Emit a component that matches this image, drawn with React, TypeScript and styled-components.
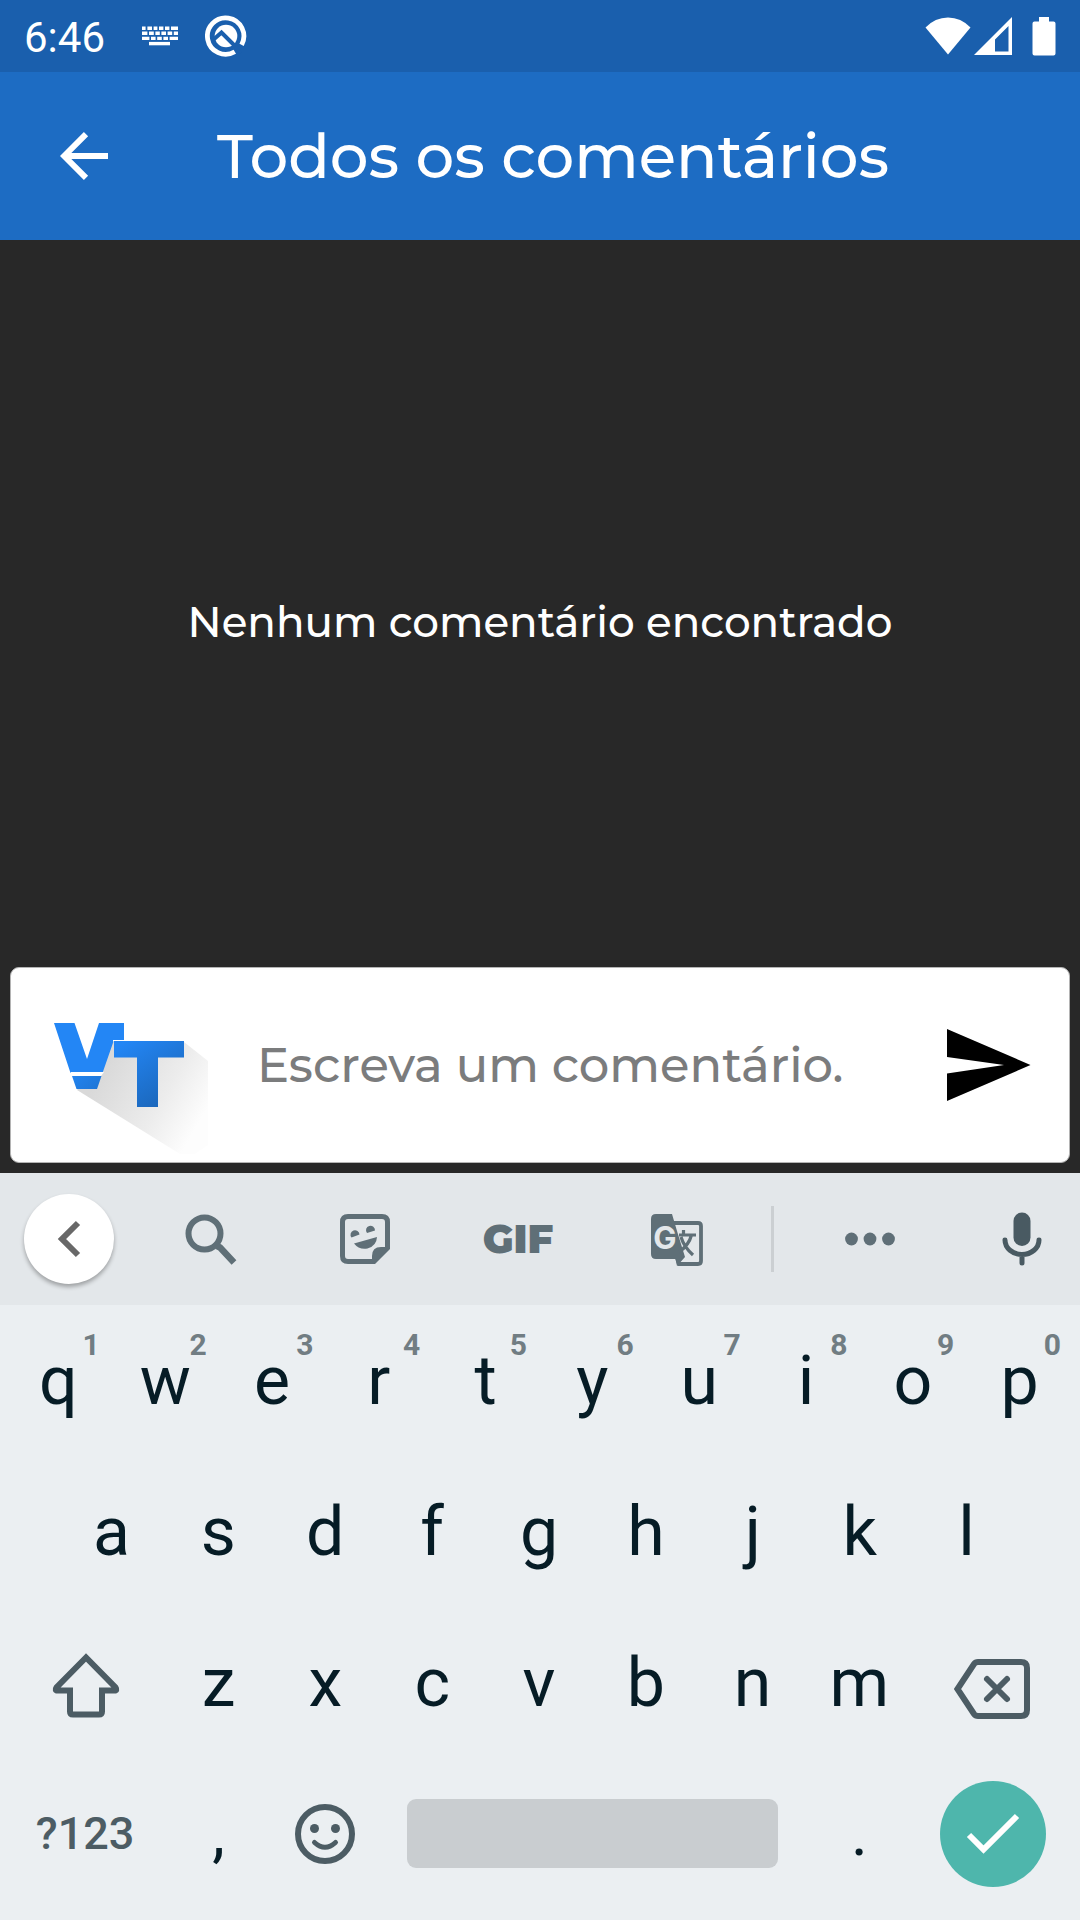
import React from "react";
import styled, { createGlobalStyle } from "styled-components";

const GlobalStyle = createGlobalStyle`
  *, *::before, *::after { box-sizing: border-box; }
  body { margin: 0; background: #282828; }
  button { margin: 0; padding: 0; border: 0; background: none; font: inherit; color: inherit; cursor: pointer; }
  svg { display: block; flex: none; }
`;

const display = `Montserrat, Inter, "Noto Sans", sans-serif`;
const system = `Roboto, "Noto Sans", sans-serif`;

const Screen = styled.div`
  display: flex;
  flex-direction: column;
  min-height: 100vh;
  background: #282828;
  font-family: ${system};
`;

const StatusBar = styled.div`
  display: flex;
  align-items: center;
  justify-content: space-between;
  height: 72px;
  padding: 0 24px;
  background: #1a5fad;
  color: #fff;
`;

const Clock = styled.time`
  font-size: 42px;
  line-height: 48px;
  margin-right: 10px;
  padding-top: 4px;
`;

const StatusGroup = styled.div<{ $gap: number }>`
  display: flex;
  align-items: center;
  gap: ${(p) => p.$gap}px;
`;

const AppBar = styled.header`
  display: flex;
  align-items: center;
  height: 168px;
  padding: 0 48px;
  gap: 97px;
  background: #1d6cc3;
  color: #fff;
`;

const BackButton = styled.button`
  display: grid;
  place-items: center;
  width: 72px;
  height: 72px;
`;

const Title = styled.h1`
  margin: 0;
  font-family: ${display};
  font-size: 61px;
  font-weight: 500;
  line-height: 72px;
  white-space: nowrap;
`;

const Comments = styled.main`
  flex: 1;
  display: grid;
  place-items: center;
  padding-top: 36px;
`;

const Empty = styled.p`
  margin: 0;
  font-family: ${display};
  font-size: 42px;
  font-weight: 500;
  line-height: 56px;
  color: #fff;
`;

const Composer = styled.form`
  display: flex;
  align-items: center;
  height: 196px;
  margin: 0 10px 10px;
  padding: 0 34px 0 40px;
  background: #fff;
  border: 1px solid #b4b4b4;
  border-radius: 9px;
`;

const LogoSlot = styled.span`
  padding-top: 48px;
`;

const Field = styled.input`
  flex: 1;
  min-width: 0;
  margin: 0 32px 0 48px;
  padding: 0;
  border: 0;
  outline: 0;
  background: none;
  font-family: ${display};
  font-size: 48px;
  font-weight: 500;
  line-height: 64px;
  color: #282828;
  &::placeholder { color: #7b7c7d; opacity: 1; }
`;

const SendButton = styled.button`
  display: grid;
  place-items: center;
  width: 92px;
  height: 96px;
`;

const Keyboard = styled.section`
  background: #ebeff2;
  padding-bottom: 11px;
  color: #061c26;
`;

const Tools = styled.div`
  display: grid;
  grid-template-columns: 138fr 146fr 162fr 144fr 174fr 16fr 180fr 120fr;
  align-items: center;
  justify-items: center;
  height: 132px;
  background: #e3e7ea;
  color: #5f6f77;
`;

const Tool = styled.button<{ $round?: boolean }>`
  display: grid;
  place-items: center;
  width: 90px;
  height: 90px;
  border-radius: 50%;
  background: ${(p) => (p.$round ? "#fff" : "transparent")};
  box-shadow: ${(p) => (p.$round ? "0 3px 4px rgba(0, 0, 0, 0.3)" : "none")};
`;

const GifLabel = styled.span`
  font-family: ${display};
  font-size: 40px;
  font-weight: 900;
  line-height: 48px;
`;

const Divider = styled.span`
  width: 3px;
  height: 66px;
  background: #cbcfd2;
`;

const Row = styled.div<{ $inset?: boolean }>`
  display: grid;
  grid-template-columns: repeat(${(p) => (p.$inset ? 18 : 20)}, minmax(0, 1fr));
  height: 151px;
  padding: ${(p) => (p.$inset ? "0 60px 0 58px" : "0 7px 0 5px")};
`;

const keySizes = { letter: 68, mark: 64, label: 45 };

const Key = styled.button<{ $span?: number; $kind?: keyof typeof keySizes }>`
  position: relative;
  display: flex;
  align-items: center;
  justify-content: center;
  grid-column: span ${(p) => p.$span ?? 2};
  font-size: ${(p) => keySizes[p.$kind ?? "letter"]}px;
  font-weight: ${(p) => (p.$kind === "label" ? 500 : 400)};
  color: ${(p) => (p.$kind === "label" ? "#4c5c64" : "#061c26")};
`;

const Hint = styled.span`
  position: absolute;
  top: 22px;
  right: 12px;
  font-size: 30px;
  font-weight: 700;
  line-height: 36px;
  color: #717d83;
`;

const SpaceBar = styled.span`
  flex: 1;
  height: 69px;
  margin: 0 28px;
  border-radius: 9px;
  background: #c9cdd0;
`;

const Enter = styled.span`
  display: grid;
  place-items: center;
  width: 106px;
  height: 106px;
  border-radius: 50%;
  background: #4eb6ac;
`;

const KeyboardIcon = () => (
  <svg width="36" height="20" viewBox="0 0 36 20" fill="none" stroke="#fff" strokeWidth="3.4">
    <path d="M0 2.2H3.600M5.400 2.200H10M11.600 2.200H15.400M17 2.200H21.400M23 2.200H27.400M29 2.200H36" />
    <path d="M0 7.300H5.400M7 7.300H11.800M13.400 7.300H17.800M19.400 7.300H24M25.600 7.300H30.200M31.800 7.300H36" />
    <path d="M0 12.4H7.4M9 12.4H13.6M15.2 12.4H19.8M21.4 12.4H26M27.6 12.4H36" />
    <path d="M7 17.6H28" />
  </svg>
);

const QIcon = () => (
  <svg width="42" height="42" viewBox="0 0 42 42">
    <path d="M36.6 29.8A18.2 18.2 0 1 0 29.8 36.8" fill="none" stroke="#fff" strokeWidth="4.8" />
    <circle cx="21" cy="21" r="11.3" fill="#fff" />
    <path d="M8 25L16.500 17.500L32 33" fill="none" stroke="#1a5fad" strokeWidth="4" />
    <path d="M30 32L36 38" stroke="#1a5fad" strokeWidth="3" />
  </svg>
);

const WifiIcon = () => (
  <svg width="46" height="38" viewBox="0 0 46 38" fill="#fff">
    <path d="M0.5 10.5Q10 0.5 23 0.5T45.500 10.5L23 37.500Z" />
  </svg>
);

const SignalIcon = () => (
  <svg width="38" height="38" viewBox="0 0 38 38" fill="#fff">
    <path fillRule="evenodd" d="M38 0V38H0ZM34.500 9L21 22.500V34.500H34.500Z" />
  </svg>
);

const BatteryIcon = () => (
  <svg width="41" height="39" viewBox="-17 0 41 39" fill="#fff">
    <path d="M7 0H17V4.500H21.500Q23.500 4.500 23.500 6.500V36.500Q23.500 38.500 21.500 38.500H2.500Q0.500 38.500 0.500 36.500V6.500Q0.500 4.500 2.500 4.500H7Z" />
  </svg>
);

const BackIcon = () => (
  <svg width="48" height="48" viewBox="0 0 48 48" fill="none" stroke="#fff" strokeWidth="6">
    <path d="M26 2.200L4.200 24L26 45.800M4.200 24H48" />
  </svg>
);

const Logo = () => (
  <svg width="158" height="132" viewBox="0 0 158 132" role="img" aria-label="VT">
    <defs>
      <linearGradient id="shade" x1="50" y1="50" x2="145" y2="105" gradientUnits="userSpaceOnUse">
        <stop offset="0" stopColor="#d9d9d9" />
        <stop offset="0.6" stopColor="#ececec" />
        <stop offset="1" stopColor="#fdfdfd" />
      </linearGradient>
      <linearGradient id="front" x1="75" y1="18" x2="115" y2="80" gradientUnits="userSpaceOnUse">
        <stop offset="0" stopColor="#2386f5" />
        <stop offset="1" stopColor="#1b67bb" />
      </linearGradient>
      <linearGradient id="tip" x1="20" y1="40" x2="52" y2="76" gradientUnits="userSpaceOnUse">
        <stop offset="0" stopColor="#2388f8" />
        <stop offset="1" stopColor="#1d71cd" />
      </linearGradient>
    </defs>
    <path d="M26 67L62 18L133 19L157 38V122L144 131H129Z" fill="url(#shade)" />
    <path d="M3 0H23.500L36 36L48 0H73V17H63L51.500 50H19.500Z" fill="#2386f5" />
    <path d="M19.500 49H53L50 53H21Z" fill="#fff" />
    <path d="M21 53H50.500L46 66H25.500Z" fill="url(#tip)" />
    <path d="M62 17H73V18.500H62Z" fill="#fff" />
    <path d="M63 18H133V34.500H107V84H86V34.500H63Z" fill="url(#front)" />
  </svg>
);

const SendIcon = () => (
  <svg width="84" height="72" viewBox="0 0 84 72">
    <path d="M0 0L83.500 36L0 72V44.500L57 36L0 28Z" fill="#000" />
  </svg>
);

const ChevronIcon = () => (
  <svg width="24" height="38" viewBox="0 0 24 38" fill="none" stroke="#686868" strokeWidth="6">
    <path d="M21 3L5 19L21 35" />
  </svg>
);

const SearchIcon = () => (
  <svg width="52" height="54" viewBox="0 -2 52 54" fill="none" stroke="currentColor">
    <circle cx="19.500" cy="19.500" r="16" strokeWidth="6" />
    <path d="M32 32L35 33.500L49 48.500" strokeWidth="6.500" />
  </svg>
);

const StickerIcon = () => (
  <svg width="50" height="50" viewBox="0 0 50 50">
    <path d="M8 2.500H42Q47.500 2.500 47.500 8V34L34 47.500H8Q2.500 47.500 2.500 42V8Q2.500 2.500 8 2.500Z" fill="none" stroke="currentColor" strokeWidth="5" />
    <g fill="currentColor">
      <path d="M32 49V42Q32 33 41 33H49Z" />
      <path d="M11.500 23.500A4.500 4.500 0 1 1 19.500 20.500ZM27 19A4.500 4.500 0 1 1 35 16.500Z" />
      <path d="M14 29.500L37 23Q36.500 32 27.500 34.500Q19 36 14 29.500Z" />
    </g>
  </svg>
);

const TranslateIcon = () => (
  <svg width="52" height="54" viewBox="0 -2 52 54">
    <path d="M22 9H47Q50 9 50 12V47Q50 50 47 50H28L26 44" fill="none" stroke="currentColor" strokeWidth="3.800" />
    <path d="M5 0H21L26 17L34 43L26 52L24.500 45H5Q0 45 0 40V5Q0 0 5 0Z" fill="currentColor" />
    <text x="14" y="34.500" textAnchor="middle" fontFamily="Inter, sans-serif" fontSize="31" fontWeight="700" fill="#e3e7ea">G</text>
    <g fill="none" stroke="currentColor" strokeWidth="3.200">
      <path d="M28 21H45M32.500 16V21M40.500 21Q38 31 28 38M30 23Q33 33 42 41" />
    </g>
  </svg>
);

const MoreIcon = () => (
  <svg width="50" height="14" viewBox="0 0 50 14" fill="currentColor">
    <circle cx="6.500" cy="7" r="6.400" />
    <circle cx="25" cy="7" r="6.400" />
    <circle cx="43.500" cy="7" r="6.400" />
  </svg>
);

const MicIcon = () => (
  <svg width="43" height="54" viewBox="-3 0 43 54" fill="none" stroke="#495a62" strokeWidth="5" strokeLinecap="round">
    <rect x="11.500" y="0.500" width="17" height="33.500" rx="8.500" fill="#495a62" stroke="none" />
    <path d="M3 28A17 14.500 0 0 0 37 28M20 43V51" />
  </svg>
);

const ShiftIcon = () => (
  <svg width="70" height="72" viewBox="-2 -6 70 72" fill="none" stroke="#4c5c64" strokeWidth="6">
    <path d="M34 4.500L4.500 34.500Q2.500 37.500 5.500 37.500H18V58.500Q18 61.500 21 61.500H47Q50 61.500 50 58.500V37.500H62.500Q65.500 37.500 63.500 34.500Z" />
  </svg>
);

const BackspaceIcon = () => (
  <svg width="78" height="72" viewBox="0 -12 78 72" fill="none" stroke="#4c5c64" strokeWidth="6">
    <path d="M24 3H67Q73 3 73 9V51Q73 57 67 57H24Q21.500 57 20 55L3.500 30L20 5Q21.500 3 24 3Z" />
    <path d="M33 20L53 40M53 20L33 40" strokeLinecap="round" />
  </svg>
);

const SmileIcon = () => (
  <svg width="60" height="60" viewBox="0 0 60 60" fill="none" stroke="#4c5c64">
    <circle cx="30" cy="30" r="27" strokeWidth="6" />
    <path d="M19.500 38.500Q30 48 40.500 38.500" strokeWidth="5" strokeLinecap="round" />
    <g fill="#4c5c64" stroke="none">
      <circle cx="19.500" cy="24.500" r="4.500" />
      <circle cx="40.500" cy="24.500" r="4.500" />
    </g>
  </svg>
);

const CheckIcon = () => (
  <svg width="54" height="42" viewBox="0 0 54 42" fill="none" stroke="#fff" strokeWidth="6">
    <path d="M3 22L17.500 36.500L51 3" />
  </svg>
);

const topRow = "qwertyuiop".split("");
const middleRow = "asdfghjkl".split("");
const bottomRow = "zxcvbnm".split("");

export default function App() {
  return (
    <Screen>
      <GlobalStyle />
      <StatusBar>
        <StatusGroup $gap={27}>
          <Clock>6:46</Clock>
          <KeyboardIcon />
          <QIcon />
        </StatusGroup>
        <StatusGroup $gap={3}>
          <WifiIcon />
          <SignalIcon />
          <BatteryIcon />
        </StatusGroup>
      </StatusBar>
      <AppBar>
        <BackButton aria-label="Voltar">
          <BackIcon />
        </BackButton>
        <Title>Todos os comentários</Title>
      </AppBar>
      <Comments>
        <Empty>Nenhum comentário encontrado</Empty>
      </Comments>
      <Composer onSubmit={(e) => e.preventDefault()}>
        <LogoSlot>
          <Logo />
        </LogoSlot>
        <Field type="text" aria-label="Comentário" placeholder="Escreva um comentário." />
        <SendButton type="submit" aria-label="Enviar">
          <SendIcon />
        </SendButton>
      </Composer>
      <Keyboard aria-label="Teclado">
        <Tools>
          <Tool $round aria-label="Fechar"><ChevronIcon /></Tool>
          <Tool aria-label="Pesquisar"><SearchIcon /></Tool>
          <Tool aria-label="Figurinhas"><StickerIcon /></Tool>
          <Tool><GifLabel>GIF</GifLabel></Tool>
          <Tool aria-label="Traduzir"><TranslateIcon /></Tool>
          <Divider />
          <Tool aria-label="Mais"><MoreIcon /></Tool>
          <Tool aria-label="Ditar"><MicIcon /></Tool>
        </Tools>
        <Row>
          {topRow.map((letter, i) => (
            <Key key={letter}>
              {letter}
              <Hint>{(i + 1) % 10}</Hint>
            </Key>
          ))}
        </Row>
        <Row $inset>
          {middleRow.map((letter) => (
            <Key key={letter}>{letter}</Key>
          ))}
        </Row>
        <Row>
          <Key $span={3} aria-label="Maiúsculas"><ShiftIcon /></Key>
          {bottomRow.map((letter) => (
            <Key key={letter}>{letter}</Key>
          ))}
          <Key $span={3} aria-label="Apagar"><BackspaceIcon /></Key>
        </Row>
        <Row>
          <Key $span={3} $kind="label">?123</Key>
          <Key $kind="mark">,</Key>
          <Key aria-label="Emojis"><SmileIcon /></Key>
          <Key $span={8} aria-label="Espaço"><SpaceBar /></Key>
          <Key $kind="mark">.</Key>
          <Key $span={3} aria-label="Concluir"><Enter><CheckIcon /></Enter></Key>
        </Row>
      </Keyboard>
    </Screen>
  );
}
